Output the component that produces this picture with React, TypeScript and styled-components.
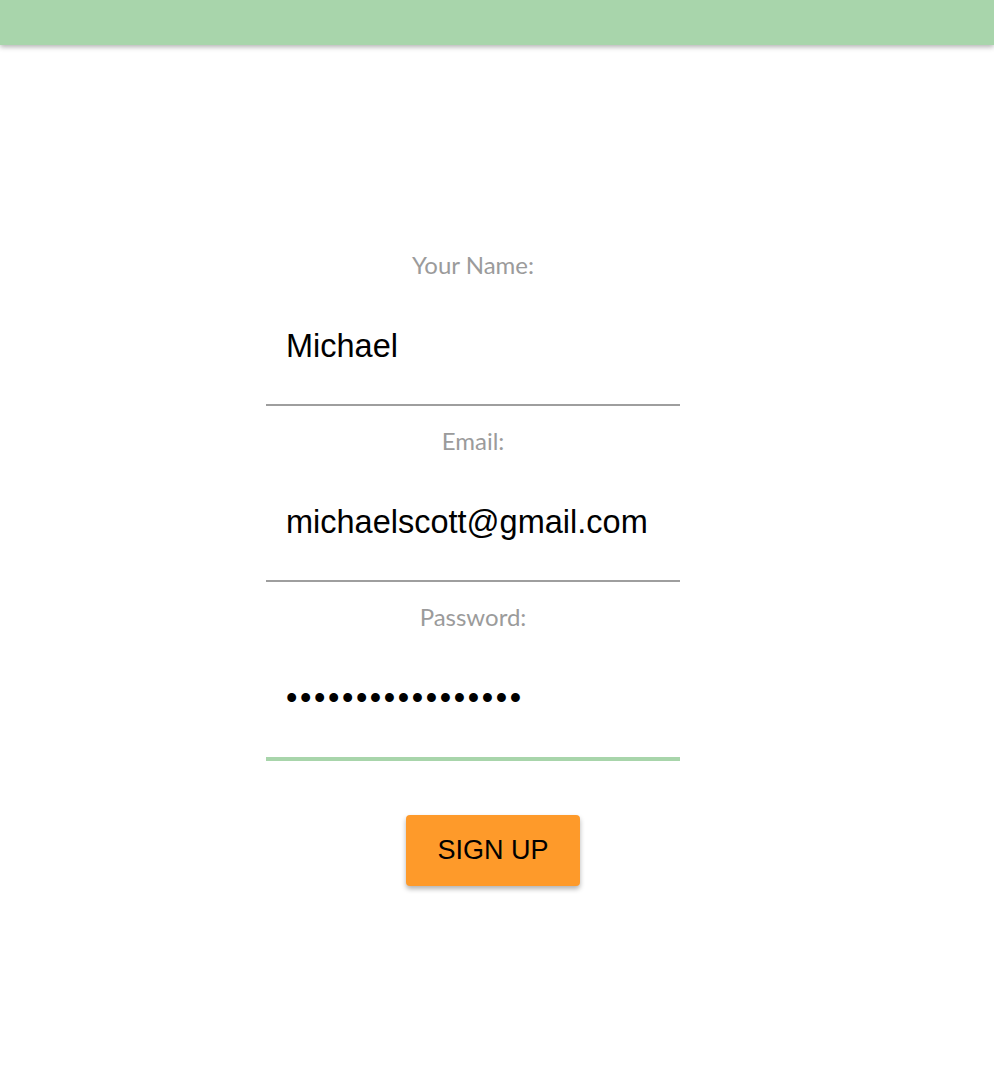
import React from "react";
import styled, { createGlobalStyle } from "styled-components";

const Global = createGlobalStyle`
  html, body { margin: 0; padding: 0; background: #ffffff; }
  body { font-family: "Liberation Sans", Arial, sans-serif; }
`;

const Page = styled.div`
  min-height: 1078px;
  background: #ffffff;
  overflow: hidden;
`;

const Header = styled.header`
  height: 45px;
  background: #a8d5ab;
  box-shadow: 0 2px 5px rgba(0, 0, 0, 0.3);
`;

const Form = styled.form`
  width: 414px;
  margin: 205px 0 0 266px;
  display: flex;
  flex-direction: column;
`;

const Field = styled.div`
  display: flex;
  flex-direction: column;
  margin-top: 20px;
  &:first-child { margin-top: 0; }
`;

const Label = styled.label`
  display: block;
  height: 29px;
  line-height: 29px;
  text-align: center;
  font-family: Lato, "Open Sans", sans-serif;
  font-size: 24px;
  color: #9b9b9b;
`;

const Input = styled.input<{ $focused?: boolean }>`
  display: block;
  width: 100%;
  box-sizing: border-box;
  height: ${(p) => (p.$focused ? 130 : 127)}px;
  padding: 49px 20px ${(p) => (p.$focused ? 40 : 39)}px;
  border: none;
  border-bottom: ${(p) => (p.$focused ? "4px solid #a8d5ab" : "2px solid #9e9e9e")};
  outline: none;
  background: transparent;
  font-family: "Liberation Sans", Arial, sans-serif;
  font-size: 32.5px;
  line-height: 37px;
  color: #000000;
  &[type="password"] { letter-spacing: 2.6px; }
`;

const ButtonRow = styled.div`
  margin-top: 54px;
  padding-left: 140px;
`;

const Button = styled.button`
  width: 174px;
  height: 71px;
  border: none;
  border-radius: 4px;
  background: #fe9a2a;
  box-shadow: 0 3px 5px rgba(0, 0, 0, 0.3);
  font-family: "Liberation Sans", Arial, sans-serif;
  font-size: 27px;
  color: #000000;
  cursor: pointer;
`;

export default function App() {
  return (
    <Page>
      <Global />
      <Header />
      <Form onSubmit={(e) => e.preventDefault()}>
        <Field>
          <Label htmlFor="name">Your Name:</Label>
          <Input id="name" type="text" defaultValue="Michael" />
        </Field>
        <Field>
          <Label htmlFor="email">Email:</Label>
          <Input id="email" type="email" defaultValue="michaelscott@gmail.com" />
        </Field>
        <Field>
          <Label htmlFor="password">Password:</Label>
          <Input id="password" type="password" defaultValue="michaelscott12345" $focused />
        </Field>
        <ButtonRow>
          <Button type="submit">SIGN UP</Button>
        </ButtonRow>
      </Form>
    </Page>
  );
}
